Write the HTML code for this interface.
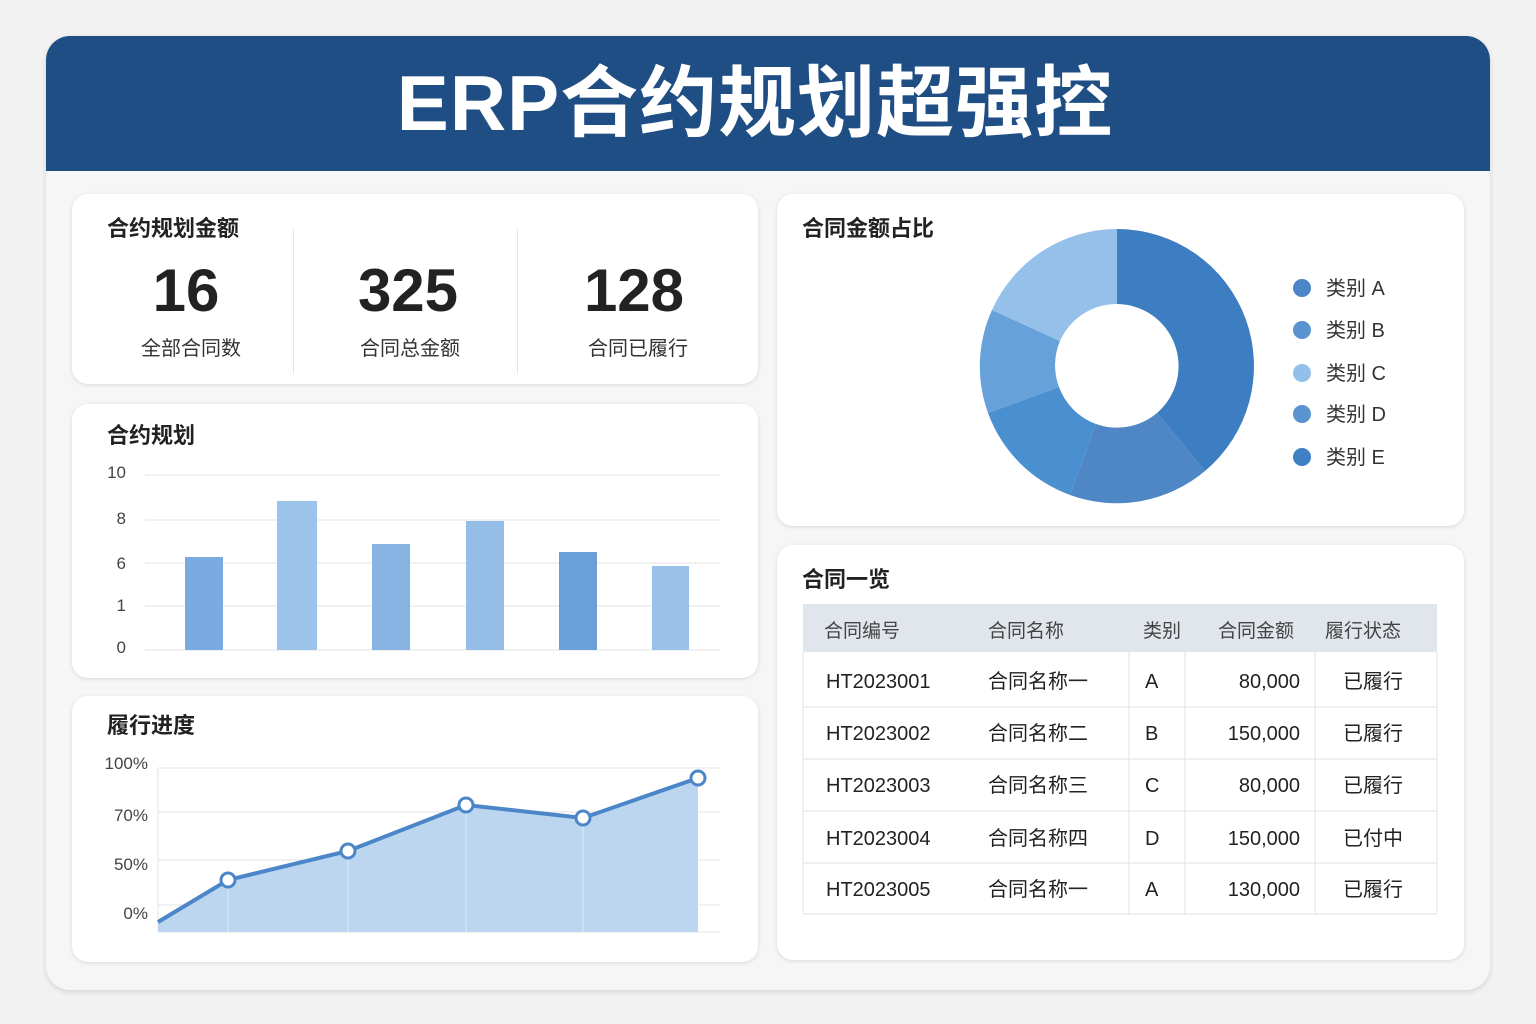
<!DOCTYPE html>
<html><head><meta charset="utf-8"><style>
*{margin:0;padding:0;box-sizing:border-box}
body{width:1536px;height:1024px;background:#f2f2f2;font-family:"Liberation Sans","Noto Sans CJK SC",sans-serif;position:relative;overflow:hidden;color:#222}
.wrap{position:absolute;left:46px;top:36px;width:1444px;height:954px;background:#f6f6f6;border-radius:24px;box-shadow:0 2px 6px rgba(0,0,0,.12);overflow:hidden}
.hd{position:absolute;left:0;top:0;width:100%;height:135px;background:#1f4e84;color:#fff;font-size:78px;font-weight:bold;text-align:center;line-height:135px;letter-spacing:1px;padding-right:26px}
.card{position:absolute;background:#fff;border-radius:16px;box-shadow:0 1px 4px rgba(0,0,0,.12)}
.t{position:absolute;font-size:22px;font-weight:bold;color:#222}
.abs{position:absolute}
</style></head><body>
<div class="wrap"><div class="hd">ERP合约规划超强控</div></div>

<div class="card" style="left:72px;top:194px;width:686px;height:190px">
<div class="t" style="left:35px;top:17px">合约规划金额</div>
<div class="abs" style="left:221px;top:35px;width:1px;height:145px;background:#e6e6e6"></div>
<div class="abs" style="left:445px;top:35px;width:1px;height:145px;background:#e6e6e6"></div>
<div class="abs" style="left:14px;top:62px;width:200px;text-align:center;font-size:60px;font-weight:bold">16</div>
<div class="abs" style="left:236px;top:62px;width:200px;text-align:center;font-size:60px;font-weight:bold">325</div>
<div class="abs" style="left:462px;top:62px;width:200px;text-align:center;font-size:60px;font-weight:bold">128</div>
<div class="abs" style="left:19px;top:138px;width:200px;text-align:center;font-size:20px;color:#333">全部合同数</div>
<div class="abs" style="left:238px;top:138px;width:200px;text-align:center;font-size:20px;color:#333">合同总金额</div>
<div class="abs" style="left:466px;top:138px;width:200px;text-align:center;font-size:20px;color:#333">合同已履行</div>
</div>

<div class="card" style="left:72px;top:404px;width:686px;height:274px">
<div class="t" style="left:35px;top:14px">合约规划</div></div>
<div class="card" style="left:72px;top:696px;width:686px;height:266px">
<div class="t" style="left:35px;top:12px">履行进度</div></div>
<div class="card" style="left:777px;top:194px;width:687px;height:332px">
<div class="t" style="left:25px;top:17px">合同金额占比</div></div>
<div class="card" style="left:777px;top:545px;width:687px;height:415px">
<div class="t" style="left:25px;top:17px">合同一览</div></div>

<svg class="abs" style="left:0;top:0" width="1536" height="1024" font-family="Liberation Sans,Noto Sans CJK SC,sans-serif">
<g stroke="#e3e3e3" stroke-width="1">
<line x1="145" y1="475" x2="720" y2="475"/><line x1="145" y1="520" x2="720" y2="520"/><line x1="145" y1="563" x2="720" y2="563"/><line x1="145" y1="606" x2="720" y2="606"/><line x1="145" y1="650" x2="720" y2="650"/>
</g>
<g font-size="17" fill="#444" text-anchor="end">
<text x="126" y="478">10</text><text x="126" y="524">8</text><text x="126" y="569">6</text><text x="126" y="611">1</text><text x="126" y="653">0</text></g>
<rect x="185" y="557" width="38" height="93" fill="#79aae0"/>
<rect x="277" y="501" width="40" height="149" fill="#9cc3ea"/>
<rect x="372" y="544" width="38" height="106" fill="#86b3e2"/>
<rect x="466" y="521" width="38" height="129" fill="#94bde8"/>
<rect x="559" y="552" width="38" height="98" fill="#6a9fd8"/>
<rect x="652" y="566" width="37" height="84" fill="#99c1ea"/>

<g stroke="#e3e3e3"><line x1="158" y1="768" x2="720" y2="768"/><line x1="158" y1="812" x2="720" y2="812"/><line x1="158" y1="860" x2="720" y2="860"/><line x1="158" y1="905" x2="720" y2="905"/><line x1="158" y1="932" x2="720" y2="932"/><line x1="158" y1="768" x2="158" y2="932"/></g>
<g font-size="17" fill="#444" text-anchor="end"><text x="148" y="769">100%</text><text x="148" y="821">70%</text><text x="148" y="870">50%</text><text x="148" y="919">0%</text></g>
<path d="M158 922 L228 880 L348 851 L466 805 L583 818 L698 778 L698 932 L158 932Z" fill="#bcd6f0"/>
<g stroke="#dfeaf6"><line x1="228" y1="880" x2="228" y2="932"/><line x1="348" y1="851" x2="348" y2="932"/><line x1="466" y1="805" x2="466" y2="932"/><line x1="583" y1="818" x2="583" y2="932"/></g>
<path d="M158 922 L228 880 L348 851 L466 805 L583 818 L698 778" fill="none" stroke="#4a86c8" stroke-width="4"/>
<g fill="#fff" stroke="#4a86c8" stroke-width="3"><circle cx="228" cy="880" r="7"/><circle cx="348" cy="851" r="7"/><circle cx="466" cy="805" r="7"/><circle cx="583" cy="818" r="7"/><circle cx="698" cy="778" r="7"/></g>

<g transform="translate(1117,366)">
<path d="M0 -137 A137 137 0 0 1 88 105 L40 47 A62 62 0 0 0 0 -62Z" fill="#3c7ec1"/>
<path d="M88 105 A137 137 0 0 1 -47 129 L-21 58 A62 62 0 0 0 40 47Z" fill="#4e86c6"/>
<path d="M-47 129 A137 137 0 0 1 -129 47 L-58 21 A62 62 0 0 0 -21 58Z" fill="#4a8fd0"/>
<path d="M-129 47 A137 137 0 0 1 -125 -56 L-57 -25 A62 62 0 0 0 -58 21Z" fill="#66a1da"/>
<path d="M-125 -56 A137 137 0 0 1 0 -137 L0 -62 A62 62 0 0 0 -57 -25Z" fill="#95c0ea"/>
</g>
<g font-size="20" fill="#333">
<circle cx="1302" cy="288" r="9" fill="#4a86c8"/><text x="1326" y="295">类别 A</text>
<circle cx="1302" cy="330" r="9" fill="#5b93d0"/><text x="1326" y="337">类别 B</text>
<circle cx="1302" cy="373" r="9" fill="#93c0ea"/><text x="1326" y="380">类别 C</text>
<circle cx="1302" cy="414" r="9" fill="#5b93d0"/><text x="1326" y="421">类别 D</text>
<circle cx="1302" cy="457" r="9" fill="#3f7fc4"/><text x="1326" y="464">类别 E</text>
</g>

<rect x="803" y="604" width="634" height="48" fill="#e1e6ec"/>
<g stroke="#e2e2e2"><line x1="803" y1="707" x2="1437" y2="707"/><line x1="803" y1="759" x2="1437" y2="759"/><line x1="803" y1="811" x2="1437" y2="811"/><line x1="803" y1="863" x2="1437" y2="863"/><line x1="803" y1="914" x2="1437" y2="914"/>
<line x1="803" y1="652" x2="803" y2="914"/><line x1="1437" y1="652" x2="1437" y2="914"/>
<line x1="1129" y1="652" x2="1129" y2="914"/><line x1="1185" y1="652" x2="1185" y2="914"/><line x1="1315" y1="652" x2="1315" y2="914"/></g>
<g font-size="19" fill="#444"><text x="824" y="637">合同编号</text><text x="988" y="637">合同名称</text><text x="1143" y="637">类别</text><text x="1218" y="637">合同金额</text><text x="1325" y="637">履行状态</text></g>
<g font-size="20" fill="#222">
<text x="826" y="688">HT2023001</text><text x="988" y="688">合同名称一</text><text x="1145" y="688">A</text><text x="1300" y="688" text-anchor="end">80,000</text><text x="1343" y="688">已履行</text>
<text x="826" y="740">HT2023002</text><text x="988" y="740">合同名称二</text><text x="1145" y="740">B</text><text x="1300" y="740" text-anchor="end">150,000</text><text x="1343" y="740">已履行</text>
<text x="826" y="792">HT2023003</text><text x="988" y="792">合同名称三</text><text x="1145" y="792">C</text><text x="1300" y="792" text-anchor="end">80,000</text><text x="1343" y="792">已履行</text>
<text x="826" y="845">HT2023004</text><text x="988" y="845">合同名称四</text><text x="1145" y="845">D</text><text x="1300" y="845" text-anchor="end">150,000</text><text x="1343" y="845">已付中</text>
<text x="826" y="896">HT2023005</text><text x="988" y="896">合同名称一</text><text x="1145" y="896">A</text><text x="1300" y="896" text-anchor="end">130,000</text><text x="1343" y="896">已履行</text>
</g>
</svg>
</body></html>
